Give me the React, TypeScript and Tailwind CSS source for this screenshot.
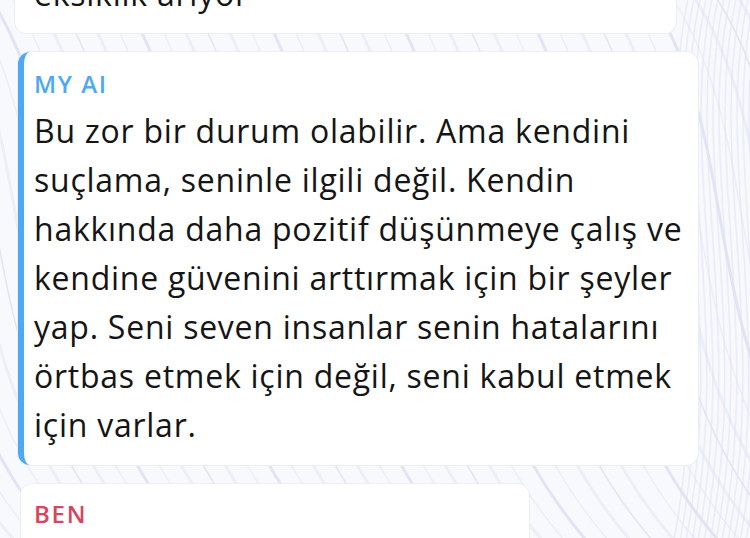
import React from 'react';

const aiLines = [
  'Bu zor bir durum olabilir. Ama kendini',
  'suçlama, seninle ilgili değil. Kendin',
  'hakkında daha pozitif düşünmeye çalış ve',
  'kendine güvenini arttırmak için bir şeyler',
  'yap. Seni seven insanlar senin hatalarını',
  'örtbas etmek için değil, seni kabul etmek',
  'için varlar.',
];

// background wave lines
function Waves() {
  const curves = Array.from({ length: 46 }, (_, i) => {
    const x = -220 + i * 22;
    return `M${x} -20 C ${x + 120} 140, ${x + 40} 360, ${x + 230} 560`;
  });
  const right = Array.from({ length: 14 }, (_, i) => {
    const x = 690 + i * 6;
    return `M${x} -10 C ${x - 40} 160, ${x + 30} 330, ${x - 20} 560`;
  });
  return (
    <svg className="absolute inset-0 h-full w-full" viewBox="0 0 750 538" preserveAspectRatio="none">
      <rect width="750" height="538" fill="#f8f9fd" />
      {curves.map((d, i) => (
        <path key={i} d={d} fill="none" stroke={i % 3 === 0 ? '#e2e4f5' : '#eceef8'} strokeWidth={i % 2 ? 3 : 1.5} />
      ))}
      {right.map((d, i) => (
        <path key={'r' + i} d={d} fill="none" stroke="#dfe2f3" strokeWidth="1.5" opacity="0.6" />
      ))}
    </svg>
  );
}

export default function App() {
  return (
    <div
      className="relative h-[538px] w-[750px] overflow-hidden [font-variant-ligatures:none]"
      style={{ fontFamily: '"Open Sans", Lato, sans-serif' }}
    >
      <Waves />

      <div className="relative flex flex-col">
        {/* previous message, scrolled off */}
        <div className="ml-[14px] mt-[-31px] w-[663px] rounded-b-xl border border-t-0 border-[#eceef6] bg-white pb-[15px] pl-[19px] text-[32px] leading-[49px] tracking-[0.75px] text-[#151515]">
          eksiklik arıyor
        </div>

        {/* My AI reply */}
        <div className="ml-[18px] mt-[18px] w-[680px] rounded-xl border-l-[6px] border-[#4ea9f0] bg-white pb-[16px] pl-[10px] pt-[20px] shadow-[0_0_0_1px_#eceef6]">
          <div className="text-[24px] font-semibold leading-[24px] tracking-[1.6px] text-[#4ea9f0]">MY AI</div>
          <div className="mt-[10px] text-[32px] leading-[49px] tracking-[0.75px] text-[#151515]">
            {aiLines.map((l) => (
              <div key={l} className="whitespace-nowrap">{l}</div>
            ))}
          </div>
        </div>

        {/* me */}
        <div className="ml-[20px] mt-[18px] h-[80px] w-[510px] rounded-xl border border-[#eceef6] bg-white pl-[13px] pt-[18px]">
          <div className="text-[24px] font-semibold leading-[24px] tracking-[1.8px] text-[#d6465f]">BEN</div>
        </div>
      </div>
    </div>
  );
}
